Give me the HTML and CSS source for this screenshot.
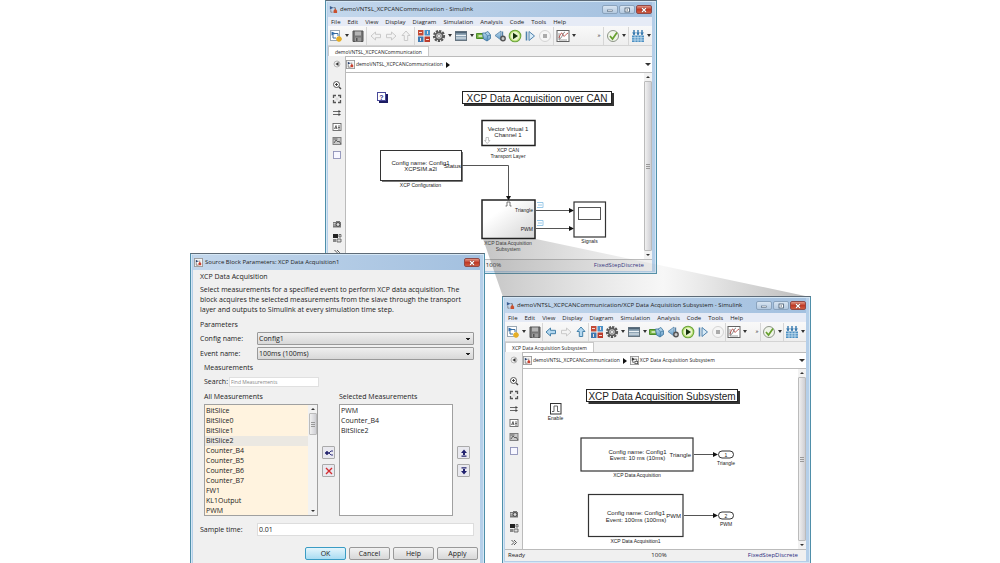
FILE: index.html
```html
<!DOCTYPE html>
<html lang="en">
<head>
<meta charset="utf-8">
<title>Simulink</title>
<link rel="stylesheet" href="styles.css">
</head>
<body>
<svg class="sprite" aria-hidden="true">
  <defs>
    <linearGradient id="g-block" x1="0" y1="0" x2="1" y2="1"><stop offset=".3" stop-color="#fff"/><stop offset="1" stop-color="#d4d4d4"/></linearGradient>
    <linearGradient id="g-blue" x1="0" y1="0" x2="0" y2="1"><stop offset="0" stop-color="#c4e0f2"/><stop offset="1" stop-color="#5d97c4"/></linearGradient>
  </defs>
  <symbol id="i-app" viewBox="0 0 10 10"><path d="M1 1l4 2-4 2z" fill="#3b5f93"/><path d="M5 3h2v2" fill="none" stroke="#555" stroke-width=".8"/><path d="M5 9V6.500L7 4l2 2.500V9z" fill="#c9502e"/><path d="M2 5v3h2" fill="none" stroke="#666" stroke-width=".7"/></symbol>
  <symbol id="i-model" viewBox="0 0 10 10"><rect x=".5" y=".5" width="9" height="9" fill="#f6f6f6" stroke="#999"/><path d="M2 2l3 1.500L2 5z" fill="#27406d"/><path d="M5 8V6l1.500-2L8 6v2z" fill="#c9402e"/><path d="M2.500 5v3H5M5 3.500h2" fill="none" stroke="#555" stroke-width=".7"/></symbol>
  <symbol id="i-sub" viewBox="0 0 10 10"><rect x=".5" y=".5" width="9" height="9" fill="#f6f6f6" stroke="#999"/><path d="M2 1.500l3.500 2L2 5.500z" fill="#333"/><path d="M5 3.500h2.500V6M3 5v2h2" fill="none" stroke="#444" stroke-width=".8"/><rect x="5.500" y="6" width="3" height="2.500" fill="#fff" stroke="#444" stroke-width=".8"/></symbol>
  <symbol id="i-new" viewBox="0 0 14 14"><rect x="1.500" y="1.500" width="9" height="10" fill="#fff" stroke="#9aa7b3"/><path d="M2.500 2.500L7 4.500 2.500 6.500z" fill="#2f6ba8"/><path d="M6 4.500h3V7M4 6v3h3" fill="none" stroke="#3c6f9d"/><path d="M10 7v6M7 10h6M8 8l4 4M12 8l-4 4" stroke="#e5ad24" stroke-width="1.400"/></symbol>
  <symbol id="i-save" viewBox="0 0 14 14"><path d="M2 2h10v10.500H2z" fill="#777" stroke="#555"/><rect x="4" y="2.500" width="6" height="4" fill="#b5b5b5"/><rect x="4" y="8.500" width="6" height="4" fill="#9a9a9a"/><rect x="5" y="9" width="1.500" height="3" fill="#555"/></symbol>
  <symbol id="i-arrow" viewBox="0 0 14 14"><path d="M2 7l4.500-4v2.300h5v3.400h-5V11z"/></symbol>
  <symbol id="i-lib" viewBox="0 0 14 14"><path d="M1 1h5.500v5.500H1z" fill="#c34a36"/><path d="M7.500 1H13v5.500H7.500z" fill="#4b92c8"/><path d="M1 7.500h5.500V13H1z" fill="#3f79b0"/><path d="M7.500 7.500H13V13H7.500z" fill="#bb3d2e"/><path d="M2 3.500h3M10.500 2v3M3.500 9v3M9 10.500h3" stroke="#f5dcd5"/></symbol>
  <symbol id="i-gear" viewBox="0 0 14 14"><circle cx="7" cy="7" r="5" fill="none" stroke="#555" stroke-width="2.200" stroke-dasharray="2.200 1.100"/><circle cx="7" cy="7" r="3.600" fill="#c7c7c7" stroke="#595959" stroke-width="1.600"/><circle cx="7" cy="7" r="1.500" fill="#fff" stroke="#666" stroke-width=".6"/></symbol>
  <symbol id="i-table" viewBox="0 0 14 14"><rect x="1.500" y="2.500" width="11" height="9" fill="#8fa5b6" stroke="#66747f"/><path d="M1.500 3.500h11" stroke="#4f6476" stroke-width="1.600"/><path d="M2 6.500h10M2 9h10" stroke="#e9f0f4"/></symbol>
  <symbol id="i-update" viewBox="0 0 16 14"><path d="M1 4.500h7v5H1z" fill="#79b343" stroke="#4c8b2c"/><path d="M3 7h4" stroke="#e6f3d8" stroke-width="1.500"/><path d="M7 4h2.500l3-1.500L15 6v3.500L11.500 12 8 10z" fill="url(#g-blue)" stroke="#3b749d" stroke-width=".8"/><path d="M9.500 4L12 7l3-1M12 7l-.5 5" fill="none" stroke="#3b749d" stroke-width=".7"/></symbol>
  <symbol id="i-back" viewBox="0 0 14 14"><path d="M8 2L2 6.500 8 11z" fill="url(#g-blue)" stroke="#5682a6" stroke-width=".8"/><path d="M9.500 2.500V8" stroke="#5682a6" stroke-width="1.400"/><circle cx="10" cy="9.500" r="2.200" fill="#ccc" stroke="#555" stroke-width="1.400"/></symbol>
  <symbol id="i-play" viewBox="0 0 14 14"><circle cx="7" cy="7" r="5.800" fill="#bde17a" stroke="#6aa53a" stroke-width="1.100"/><circle cx="7" cy="7" r="4.200" fill="#e8f6cd"/><path d="M5 3.800L10 7l-5 3.200z" fill="#14300c"/></symbol>
  <symbol id="i-step" viewBox="0 0 14 14"><path d="M3.500 2.500v9" stroke="#4f82ad" stroke-width="1.600"/><path d="M6 2.500L11.500 7 6 11.500z" fill="#d9ebf7" stroke="#4f82ad"/></symbol>
  <symbol id="i-stop" viewBox="0 0 14 14"><circle cx="7" cy="7" r="5.500" fill="#f5f5f5" stroke="#d4d4d4"/><rect x="5" y="5" width="4" height="4" fill="#aaa"/></symbol>
  <symbol id="i-scope" viewBox="0 0 14 14"><rect x="1" y="1.500" width="12" height="11" fill="#fff" stroke="#626262"/><path d="M3 4v7h8" fill="none" stroke="#888" stroke-width=".8"/><path d="M3 9c2-6 3-6 4-3s2 0 5-2" fill="none" stroke="#b0403a" stroke-width=".9"/><path d="M3 10c3 0 4-7 6-7" fill="none" stroke="#555" stroke-width=".7"/></symbol>
  <symbol id="i-check" viewBox="0 0 14 14"><circle cx="7" cy="7" r="5.500" fill="#f0f5e9" stroke="#8d9588"/><path d="M4 7l2.500 3L11 3.500" fill="none" stroke="#67a02e" stroke-width="1.700"/></symbol>
  <symbol id="i-build" viewBox="0 0 14 14"><path d="M3 1v5M7 1v5M11 1v5" stroke="#3779ae" stroke-width="1.400"/><path d="M1 3.500h4L3 6zM5 3.500h4L7 6zM9 3.500h4L11 6z" fill="#3779ae"/><rect x="1" y="6.500" width="12" height="6.500" fill="#4e90c2"/><path d="M1 8.700h12M1 11h12M4 7v6M7 7v6M10 7v6" stroke="#cce3f2" stroke-width=".8"/></symbol>
  <symbol id="i-hide" viewBox="0 0 10 10"><circle cx="5" cy="5" r="3" fill="#eee" stroke="#aaa" stroke-width=".8"/><path d="M6.500 3v4L3.500 5z" fill="#333"/></symbol>
  <symbol id="i-zoom" viewBox="0 0 10 10"><circle cx="4.500" cy="4.500" r="3" fill="#fff" stroke="#555"/><path d="M7 7l2 2" stroke="#444" stroke-width="1.400"/><path d="M3 4.500h3M4.500 3v3" stroke="#333" stroke-width=".9"/></symbol>
  <symbol id="i-fit" viewBox="0 0 10 10"><path d="M1.500 4V1.500H4M6 1.500h2.500V4M8.500 6v2.500H6M4 8.500H1.500V6" fill="none" stroke="#555" stroke-width="1.300"/><rect x="3.500" y="3.500" width="3" height="3" fill="#ddd"/></symbol>
  <symbol id="i-lines" viewBox="0 0 10 10"><path d="M1 3.500h6M1 6.500h6" stroke="#555" stroke-width=".9"/><path d="M6.500 2L9 3.500 6.500 5zM6.500 5L9 6.500 6.500 8z" fill="#444"/></symbol>
  <symbol id="i-note" viewBox="0 0 10 10"><rect x="1" y="1.500" width="8" height="7" fill="#fff" stroke="#666" stroke-width=".9"/><path d="M2.500 7L4 3.500 5 7M3 6h2M6 4h2M6 5.500h2M6 7h2" fill="none" stroke="#444" stroke-width=".8"/></symbol>
  <symbol id="i-image" viewBox="0 0 10 10"><rect x="1" y="1.500" width="8" height="7" fill="#c8c8c8" stroke="#777" stroke-width=".9"/><path d="M1.500 3h4M2 7l2-3 2 2 1-1 2 3" fill="none" stroke="#555" stroke-width=".9"/></symbol>
  <symbol id="i-area" viewBox="0 0 10 10"><rect x="1.500" y="1.500" width="7" height="7" fill="#f7f7ff" stroke="#8f92b8" stroke-width=".9"/></symbol>
  <symbol id="i-camera" viewBox="0 0 10 10"><path d="M1 3h3V2h4v1h1v5.500H1z" fill="#777"/><circle cx="6" cy="5.500" r="1.900" fill="#ddd" stroke="#333" stroke-width=".8"/><path d="M1.500 4.500h2M1.500 6h2" stroke="#eee" stroke-width=".7"/></symbol>
  <symbol id="i-browser" viewBox="0 0 10 10"><path d="M1 1h5v4H1z" fill="#222"/><rect x="1" y="6" width="3" height="3" fill="#888"/><path d="M5 6h4v3H5zM7 1.500h2V4H7z" fill="#ddd" stroke="#555" stroke-width=".8"/></symbol>
  <symbol id="i-more" viewBox="0 0 10 10"><path d="M2.500 3L5 5.500 2.500 8M5 3l2.500 2.500L5 8" fill="none" stroke="#444" stroke-width=".9"/></symbol>
  <symbol id="i-min" viewBox="0 0 8 6"><rect x="1.500" y="3" width="5" height="1.500" fill="#fff" stroke="#50657a" stroke-width=".6"/></symbol>
  <symbol id="i-max" viewBox="0 0 8 6"><rect x="2" y="1" width="4.500" height="4" fill="#fff" stroke="#44586c" stroke-width=".8"/><path d="M3.500 3h1.500" stroke="#44586c"/></symbol>
  <symbol id="i-close" viewBox="0 0 8 6"><path d="M2 1l4 4M6 1L2 5" stroke="#6f2018" stroke-width="2"/><path d="M2 1l4 4M6 1L2 5" stroke="#fff" stroke-width="1.300"/></symbol>
</svg>

<main class="desktop">
  <section class="window window-model" aria-label="Model window">
    <header class="titlebar">
      <svg class="app-icon"><use href="#i-app"/></svg>
      <h1 class="title">demoVNTSL_XCPCANCommunication - Simulink</h1>
      <div class="controls">
        <button aria-label="Minimize"><svg><use href="#i-min"/></svg></button>
        <button aria-label="Maximize"><svg><use href="#i-max"/></svg></button>
        <button class="close" aria-label="Close"><svg><use href="#i-close"/></svg></button>
      </div>
    </header>
    <nav class="menu"><button>File</button><button>Edit</button><button>View</button><button>Display</button><button>Diagram</button><button>Simulation</button><button>Analysis</button><button>Code</button><button>Tools</button><button>Help</button></nav>
    <div class="toolbar">
      <button class="tool" aria-label="New"><svg><use href="#i-new"/></svg></button><button class="caret" aria-label="New options"></button>
      <button class="tool" aria-label="Save"><svg><use href="#i-save"/></svg></button><i class="sep"></i>
      <button class="tool off" aria-label="Back"><svg><use href="#i-arrow"/></svg></button>
      <button class="tool off flip" aria-label="Forward"><svg><use href="#i-arrow"/></svg></button>
      <button class="tool off turn" aria-label="Up"><svg><use href="#i-arrow"/></svg></button><i class="sep"></i>
      <button class="tool" aria-label="Library"><svg><use href="#i-lib"/></svg></button>
      <button class="tool" aria-label="Settings"><svg><use href="#i-gear"/></svg></button><button class="caret" aria-label="Settings options"></button>
      <button class="tool" aria-label="Explorer"><svg><use href="#i-table"/></svg></button><button class="caret" aria-label="Explorer options"></button>
      <button class="tool wide" aria-label="Update"><svg><use href="#i-update"/></svg></button>
      <button class="tool" aria-label="Step back"><svg><use href="#i-back"/></svg></button>
      <button class="tool" aria-label="Run"><svg><use href="#i-play"/></svg></button>
      <button class="tool" aria-label="Step forward"><svg><use href="#i-step"/></svg></button>
      <button class="tool" aria-label="Stop"><svg><use href="#i-stop"/></svg></button>
      <i class="sep"></i><button class="tool" aria-label="Scope"><svg><use href="#i-scope"/></svg></button><button class="caret" aria-label="Scope options"></button>
      <button class="overflow">»</button><i class="sep"></i>
      <button class="tool" aria-label="Check"><svg><use href="#i-check"/></svg></button><button class="caret" aria-label="Check options"></button><i class="sep"></i>
      <button class="tool" aria-label="Build"><svg><use href="#i-build"/></svg></button><button class="caret" aria-label="Build options"></button>
    </div>
    <div class="tabs"><button class="tab">demoVNTSL_XCPCANCommunication</button></div>
    <div class="workspace">
      <aside class="palette">
        <button class="hide" aria-label="Hide browser"><svg><use href="#i-hide"/></svg></button>
        <button aria-label="Zoom"><svg><use href="#i-zoom"/></svg></button>
        <button aria-label="Fit"><svg><use href="#i-fit"/></svg></button>
        <button aria-label="Signals"><svg><use href="#i-lines"/></svg></button>
        <button aria-label="Annotation"><svg><use href="#i-note"/></svg></button>
        <button aria-label="Image"><svg><use href="#i-image"/></svg></button>
        <button aria-label="Area"><svg><use href="#i-area"/></svg></button>
        <button class="low" aria-label="Camera"><svg><use href="#i-camera"/></svg></button>
        <button aria-label="Model browser"><svg><use href="#i-browser"/></svg></button>
        <button aria-label="More"><svg><use href="#i-more"/></svg></button>
      </aside>
      <div class="editor">
        <div class="crumbs"><svg class="crumb-icon"><use href="#i-model"/></svg><span>demoVNTSL_XCPCANCommunication</span><i class="crumb-arrow"></i><button class="caret big" aria-label="History"></button></div>
        <div class="canvas">
          <svg class="diagram" height="186" viewBox="346 73 298 186" preserveAspectRatio="xMinYMin meet">
            <rect x="379" y="94" width="9" height="9" fill="#1b1b62"/><rect x="377.500" y="92.500" width="8" height="8" fill="#fff" stroke="#4a4a9a"/><text class="help" x="381.500" y="99.500">?</text>
            <rect x="464" y="93" width="150" height="13" fill="#333"/><rect x="462.500" y="91.500" width="149" height="12" fill="#fff" stroke="#222"/><text class="head" x="537" y="101.500">XCP Data Acquisition over CAN</text>
            <rect x="482" y="120.500" width="53" height="25" fill="#fff" stroke="#222" stroke-width="1.500"/><text x="508" y="131">Vector Virtual 1</text><text x="508" y="137">Channel 1</text><path d="M486 137.500h2.500v3h1.500l-2.800 3-2.700-3h1.500z" fill="#fff" stroke="#aaa" stroke-width=".7"/>
            <text class="tag" x="508" y="151.500">XCP CAN</text><text class="tag" x="508" y="158">Transport Layer</text>
            <path d="M382 181.500h80.500V152" fill="none" stroke="#777"/><rect x="380.500" y="150.500" width="81" height="30" fill="#fff" stroke="#333"/><text x="420.500" y="164.500">Config name: Config1</text><text x="420.500" y="170.500">XCPSIM.a2l</text><text class="end" x="461" y="168">Status</text><text class="tag" x="420.500" y="186.500">XCP Configuration</text>
            <path d="M462 165.500h46.500V197" fill="none" stroke="#555"/><path d="M506 196h5l-2.500 4.500z" fill="#111"/>
            <rect x="482" y="200" width="53" height="38.500" fill="url(#g-block)" stroke="#222" stroke-width="1.500"/><path d="M505.500 206h1.500v-4h3v4h1.500" fill="none" stroke="#555" stroke-width=".8"/><text class="tag end" x="533" y="212">Triangle</text><text class="tag end" x="533" y="230.500">PWM</text>
            <path d="M536 210.500h36M536 228.500h36" stroke="#555"/><path d="M569 208l5 2.500-5 2.500zM569 226l5 2.500-5 2.500z" fill="#111"/>
            <path d="M537 202.500h6v5h-6M538 205h4M537 220.500h6v5h-6M538 223h4" fill="none" stroke="#8fc3e5" stroke-width=".9"/>
            <rect x="574" y="202" width="31.500" height="35" fill="#fff" stroke="#333" stroke-width="1.200"/><rect x="578.500" y="207.500" width="22" height="12" fill="#fff" stroke="#555"/><text class="tag" x="589.500" y="243">Signals</text>
            <text class="tag" x="508" y="245">XCP Data Acquisition</text><text class="tag" x="508" y="251">Subsystem</text>
          </svg>
          <div class="scroll"><i class="up"></i><i class="thumb"></i><i class="down"></i></div>
        </div>
      </div>
    </div>
    <footer class="status"><span></span><span class="zoom-level">100%</span><span class="solver">FixedStepDiscrete</span></footer>
  </section>

  <svg class="callout" viewBox="482 239 328 58" preserveAspectRatio="none" aria-hidden="true">
    <defs><linearGradient id="g-fan"><stop offset="0" stop-color="#666" stop-opacity=".38"/><stop offset=".2" stop-color="#777" stop-opacity=".28"/><stop offset=".55" stop-color="#999" stop-opacity=".08"/><stop offset=".75" stop-color="#777" stop-opacity=".25"/><stop offset="1" stop-color="#666" stop-opacity=".45"/></linearGradient></defs>
    <path d="M483 239h53l274 58H503z" fill="url(#g-fan)"/>
  </svg>

  <section class="window window-sub" aria-label="Subsystem window">
    <header class="titlebar">
      <svg class="app-icon"><use href="#i-app"/></svg>
      <h2 class="title">demoVNTSL_XCPCANCommunication/XCP Data Acquisition Subsystem - Simulink</h2>
      <div class="controls">
        <button aria-label="Minimize"><svg><use href="#i-min"/></svg></button>
        <button aria-label="Maximize"><svg><use href="#i-max"/></svg></button>
        <button class="close" aria-label="Close"><svg><use href="#i-close"/></svg></button>
      </div>
    </header>
    <nav class="menu"><button>File</button><button>Edit</button><button>View</button><button>Display</button><button>Diagram</button><button>Simulation</button><button>Analysis</button><button>Code</button><button>Tools</button><button>Help</button></nav>
    <div class="toolbar tight">
      <button class="tool" aria-label="New"><svg><use href="#i-new"/></svg></button><button class="caret" aria-label="New options"></button>
      <button class="tool" aria-label="Save"><svg><use href="#i-save"/></svg></button><i class="sep"></i>
      <button class="tool on" aria-label="Back"><svg><use href="#i-arrow"/></svg></button>
      <button class="tool off flip" aria-label="Forward"><svg><use href="#i-arrow"/></svg></button>
      <button class="tool on turn" aria-label="Up"><svg><use href="#i-arrow"/></svg></button><i class="sep"></i>
      <button class="tool" aria-label="Library"><svg><use href="#i-lib"/></svg></button>
      <button class="tool" aria-label="Settings"><svg><use href="#i-gear"/></svg></button><button class="caret" aria-label="Settings options"></button>
      <button class="tool" aria-label="Explorer"><svg><use href="#i-table"/></svg></button><button class="caret" aria-label="Explorer options"></button>
      <button class="tool wide" aria-label="Update"><svg><use href="#i-update"/></svg></button>
      <button class="tool" aria-label="Step back"><svg><use href="#i-back"/></svg></button>
      <button class="tool" aria-label="Run"><svg><use href="#i-play"/></svg></button>
      <button class="tool" aria-label="Step forward"><svg><use href="#i-step"/></svg></button>
      <button class="tool" aria-label="Stop"><svg><use href="#i-stop"/></svg></button>
      <i class="sep"></i><button class="tool" aria-label="Scope"><svg><use href="#i-scope"/></svg></button><button class="caret" aria-label="Scope options"></button>
      <button class="overflow">»</button><i class="sep"></i>
      <button class="tool" aria-label="Check"><svg><use href="#i-check"/></svg></button><button class="caret" aria-label="Check options"></button><i class="sep"></i>
      <button class="tool" aria-label="Build"><svg><use href="#i-build"/></svg></button><button class="caret" aria-label="Build options"></button>
    </div>
    <div class="tabs"><button class="tab">XCP Data Acquisition Subsystem</button></div>
    <div class="workspace">
      <aside class="palette">
        <button class="hide" aria-label="Hide browser"><svg><use href="#i-hide"/></svg></button>
        <button aria-label="Zoom"><svg><use href="#i-zoom"/></svg></button>
        <button aria-label="Fit"><svg><use href="#i-fit"/></svg></button>
        <button aria-label="Signals"><svg><use href="#i-lines"/></svg></button>
        <button aria-label="Annotation"><svg><use href="#i-note"/></svg></button>
        <button aria-label="Image"><svg><use href="#i-image"/></svg></button>
        <button aria-label="Area"><svg><use href="#i-area"/></svg></button>
        <button class="low" aria-label="Camera"><svg><use href="#i-camera"/></svg></button>
        <button aria-label="Model browser"><svg><use href="#i-browser"/></svg></button>
        <button aria-label="More"><svg><use href="#i-more"/></svg></button>
      </aside>
      <div class="editor">
        <div class="crumbs"><svg class="crumb-icon"><use href="#i-model"/></svg><span>demoVNTSL_XCPCANCommunication</span><i class="crumb-arrow"></i><svg class="crumb-icon"><use href="#i-sub"/></svg><span>XCP Data Acquisition Subsystem</span><button class="caret big" aria-label="History"></button></div>
        <div class="canvas">
          <svg class="diagram" height="180" viewBox="523 369 275 180" preserveAspectRatio="xMinYMin meet">
            <rect x="588.500" y="391" width="151.500" height="13" fill="#333"/><rect x="586.500" y="389.500" width="151" height="12" fill="#fff" stroke="#222"/><text class="head" x="662" y="399.500">XCP Data Acquisition Subsystem</text>
            <rect x="550.500" y="403.500" width="10.500" height="10.500" fill="#fff" stroke="#333"/><path d="M552 411.500h2v-5.500h3.500v5.500h2" fill="none" stroke="#555" stroke-width=".9"/><text class="tag" x="555.500" y="420">Enable</text>
            <rect x="581" y="438" width="112" height="33" fill="#fff" stroke="#333" stroke-width="1.200"/><text x="637.500" y="453.500">Config name: Config1</text><text x="637.500" y="459.500">Event: 10 ms (10ms)</text><text class="end" x="691" y="456.500">Triangle</text><text class="tag" x="637" y="477">XCP Data Acquisition</text>
            <path d="M694 454.500h20" stroke="#555"/><path d="M713 452l5 2.500-5 2.500z" fill="#111"/><rect x="718.500" y="451" width="15" height="7" rx="3.500" fill="#fff" stroke="#333"/><text class="tag" x="726" y="456.500">1</text><text class="tag" x="726" y="464.500">Triangle</text>
            <rect x="588.500" y="494.500" width="94.500" height="42" fill="#fff" stroke="#333" stroke-width="1.200"/><text x="636" y="515">Config name: Config1</text><text x="636" y="521.500">Event: 100ms (100ms)</text><text class="end" x="681" y="517.500">PWM</text><text class="tag" x="635.500" y="542.500">XCP Data Acquisition1</text>
            <path d="M684 515.500h30" stroke="#555"/><path d="M713 513l5 2.500-5 2.500z" fill="#111"/><rect x="718.500" y="512" width="15" height="7" rx="3.500" fill="#fff" stroke="#333"/><text class="tag" x="726" y="517.500">2</text><text class="tag" x="726" y="525.500">PWM</text>
          </svg>
          <div class="scroll"><i class="up"></i><i class="thumb"></i><i class="down"></i></div>
        </div>
      </div>
    </div>
    <footer class="status"><span>Ready</span><span class="zoom-level">100%</span><span class="solver">FixedStepDiscrete</span></footer>
  </section>

  <form class="window dialog" aria-label="Block parameters">
    <header class="titlebar">
      <svg class="app-icon"><use href="#i-model"/></svg>
      <h2 class="title">Source Block Parameters: XCP Data Acquisition1</h2>
      <div class="controls"><button type="button" class="close" aria-label="Close"><svg><use href="#i-close"/></svg></button></div>
    </header>
    <div class="form">
      <h3>XCP Data Acquisition</h3>
      <p class="about">Select measurements for a specified event to perform XCP data acquisition. The<br>block acquires the selected measurements from the slave through the transport<br>layer and outputs to Simulink at every simulation time step.</p>
      <h3>Parameters</h3>
      <div class="field"><label for="config">Config name:</label><select id="config"><option>Config1</option></select></div>
      <div class="field"><label for="event">Event name:</label><select id="event"><option>100ms (100ms)</option></select></div>
      <div class="group">
        <h3>Measurements</h3>
        <div class="search"><label for="search">Search:</label><input id="search" type="text" placeholder="Find Measurements"></div>
        <div class="lists">
          <div class="list-col">
            <label for="all">All Measurements</label>
            <div class="listbox cream">
              <select id="all" multiple size="11"><option>BitSlice</option><option>BitSlice0</option><option>BitSlice1</option><option class="hot">BitSlice2</option><option>Counter_B4</option><option>Counter_B5</option><option>Counter_B6</option><option>Counter_B7</option><option>FW1</option><option>KL1Output</option><option>PWM</option></select>
              <div class="scroll"><i class="up"></i><i class="thumb"></i><i class="down"></i></div>
            </div>
          </div>
          <div class="moves">
            <button type="button" aria-label="Add"><svg viewBox="0 0 10 10"><path d="M1 5h4M3 3v4" stroke="#181866" stroke-width="1.400"/><path d="M5 5l2-2h2M5 5l2 2h2" fill="none" stroke="#333380"/></svg></button>
            <button type="button" aria-label="Remove"><svg viewBox="0 0 10 10"><path d="M2 2l6 6M8 2L2 8" stroke="#d32c30" stroke-width="1.400"/></svg></button>
          </div>
          <div class="list-col">
            <label for="chosen">Selected Measurements</label>
            <div class="listbox"><select id="chosen" multiple size="11"><option>PWM</option><option>Counter_B4</option><option>BitSlice2</option></select></div>
          </div>
          <div class="moves">
            <button type="button" aria-label="Move up"><svg viewBox="0 0 10 10"><path d="M5 1.500L8 5H6v2H4V5H2zM2.500 7.500h5v1.200h-5z" fill="#22226e"/></svg></button>
            <button type="button" aria-label="Move down"><svg viewBox="0 0 10 10"><path d="M5 8.500L8 5H6V3H4v2H2zM2.500 1.300h5v1.200h-5z" fill="#22226e"/></svg></button>
          </div>
        </div>
      </div>
      <div class="field sample"><label for="sample">Sample time:</label><input id="sample" type="text" value="0.01"></div>
      <div class="actions"><button type="button" class="primary">OK</button><button type="button">Cancel</button><button type="button">Help</button><button type="button">Apply</button></div>
    </div>
  </form>
</main>
</body>
</html>
```

FILE: styles.css
```css
* { box-sizing: border-box; }
body { margin: 0; background: #fff; color: #222; font: 6px/9px "Open Sans", "Noto Sans", sans-serif; }
button, input, select { font: inherit; color: inherit; margin: 0; padding: 0; border: 0; background: none; border-radius: 0; }
h1, h2, h3, p { margin: 0; font: inherit; }
.sprite { position: absolute; width: 0; height: 0; }
.desktop { position: relative; min-height: 563px; overflow: hidden; }

/* Windows */
.window { position: absolute; display: flex; flex-direction: column; border: 1px solid #4f8fa9; border-top-color: #5e6b77; background: #b5cfe9; padding: 1px 4px 2px 2px; box-shadow: inset 0 0 0 1px #d5e7f5; }
.window-model { left: 32.500%; top: 0; width: 33.200%; }
.window-sub { left: 50.200%; top: 296px; width: 30.900%; }
.dialog { left: 19%; top: 253px; width: 29.500%; }
.titlebar { display: flex; align-items: center; height: 15px; padding-left: 1px; gap: 2px; background: linear-gradient(90deg, #c3d7ec, #a3c0df); }
.app-icon { width: 9px; height: 9px; flex: none; }
.title { flex: 1; min-width: 0; white-space: nowrap; }
.controls { display: flex; gap: 1px; height: 9px; }
.controls button { width: 16px; display: grid; place-items: center; border: 1px solid #8aa3bd; border-radius: 2px; background: linear-gradient(#d7e4f1, #b4c9df); }
.controls svg { width: 8px; height: 6px; }
.controls .close { background: linear-gradient(#e39684, #c03a26 50%, #cf5d42); border-color: #8f4a48; }

.menu { display: flex; gap: 7px; height: 9px; padding-left: 3px; background: #e6ebf6; }
.menu button { line-height: 8px; }
.toolbar { display: flex; align-items: center; height: 20px; background: linear-gradient(#f9f9f9, #eee); border-bottom: 1px solid #d4d4d4; }
.tool { width: 15px; height: 16px; display: grid; place-items: center; flex: none; }
.tool svg { width: 14px; height: 14px; }
.tool.wide, .wide svg { width: 17px; }
.tool.off { fill: #f3f3f3; stroke: #c9c9c9; }
.tool.on { fill: #b4d8f0; stroke: #4682ab; }
.flip svg { transform: scaleX(-1); }
.turn svg { transform: rotate(90deg); }
.sep { flex: none; width: 1px; height: 18px; margin: 0 1px; background: #d6d6d6; }
.tight .sep { margin: 0; }
.caret { flex: none; width: 7px; height: 12px; display: grid; place-items: center; }
.caret::before { content: ""; border: 2px solid transparent; border-top: 3px solid #333; border-bottom: 0; }
.caret.big { width: 8px; margin-left: auto; }
.caret.big::before { border-width: 3px 3px 0; }
.overflow { margin-left: auto; width: 6px; }

.tabs { display: flex; height: 10px; background: #f0f0f0; }
.tab { min-width: 88px; padding: 0 6px; background: #fff; border: 1px solid #c8c8c8; border-bottom: 0; font-size: 5px; line-height: 8px; white-space: nowrap; }
.workspace { display: flex; }
.palette { flex: none; width: 17px; display: flex; flex-direction: column; align-items: center; gap: 4px; padding: 3px 0 2px; background: #f0f0f0; }
.palette button { height: 10px; }
.palette svg { display: block; width: 10px; height: 10px; }
.palette .hide { margin-bottom: 7px; }
.palette .low { margin-top: auto; }
.editor { flex: 1; min-width: 0; }
.crumbs { display: flex; align-items: center; gap: 1px; height: 17px; background: #fff; border: 1px solid #bbb; border-right: 0; font-size: 5px; white-space: nowrap; }
.crumb-icon { flex: none; width: 9px; height: 9px; }
.crumb-arrow { margin: 0 2px; border: 3px solid transparent; border-left: 4px solid #111; border-right: 0; }
.canvas { display: flex; background: #fff; border-left: 1px solid #bbb; }
.diagram { display: block; flex: 1; min-width: 0; font: 6px "Liberation Sans", Arial, sans-serif; text-anchor: middle; fill: #222; }
.diagram .head { font-size: 10px; }
.diagram .tag { font-size: 5px; }
.diagram .end { text-anchor: end; }
.diagram .help { font-size: 7px; font-weight: bold; fill: #33338a; }
.scroll { flex: none; width: 8px; display: flex; flex-direction: column; align-items: center; background: #f2f2f2; }
.scroll .up, .scroll .down { margin: 3px 0; border: 2px solid transparent; }
.scroll .up { border-bottom: 2px solid #333; border-top: 0; }
.scroll .down { border-top: 2px solid #333; border-bottom: 0; }
.scroll .thumb { flex: 1; width: 8px; border: 1px solid #bbb; border-radius: 1px; background: repeating-linear-gradient(#999 0 1px, transparent 1px 2px) center / 4px 5px no-repeat, linear-gradient(90deg, #f0f0f0, #cfcfd4); }
.status { display: grid; grid-template-columns: 1fr auto 1fr; align-items: center; height: 12px; padding: 0 8px 0 3px; background: #f0f0f0; border-top: 1px solid #bbb; }
.zoom-level { padding-left: 12px; }
.solver { text-align: right; color: #2a2a80; }
.callout { position: absolute; left: 48.200%; top: 239px; width: 32.800%; height: 58px; }

/* Parameter dialog */
.form { background: #f0f0f0; padding: 2px 6px 4px 7px; font: 7px/10px "Open Sans", "Noto Sans", sans-serif; }
.about { margin: 3px 0 5px; white-space: nowrap; }
.field { display: flex; align-items: center; height: 13px; margin-top: 2px; }
.field label { flex: none; width: 57px; }
.field select, .field input { flex: 1; min-width: 0; height: 13px; }
.field select { appearance: none; padding-left: 1px; border: 1px solid #999; border-radius: 1px; background: linear-gradient(45deg, transparent 50%, #222 50%) right 5px center / 2px 2px no-repeat, linear-gradient(-45deg, transparent 50%, #222 50%) right 3px center / 2px 2px no-repeat, linear-gradient(#efefef, #d8d8d8); }
.group { padding: 3px 4px 0; }
.search { display: flex; align-items: center; height: 11px; margin-top: 3px; gap: 1px; }
.search input { width: 90px; height: 10px; padding-left: 1px; background: #fff; border: 1px solid #e0e0e0; font-size: 5px; }
.search input::placeholder { color: #888; }
.lists { display: flex; gap: 4px; margin-top: 5px; }
.list-col { flex: 1; min-width: 0; display: flex; flex-direction: column; gap: 2px; }
.listbox { display: flex; height: 112px; border: 1px solid #a0a0a0; background: #fff; }
.listbox.cream { background: #fff3df; }
.listbox select { flex: 1; min-width: 0; height: 110px; padding-top: 1px; overflow: hidden; outline: 0; }
.listbox option { height: 10px; min-height: 10px; padding: 0 1px; font-size: 7px; line-height: 10px; }
.listbox .hot { background: #ebe8e2; }
.listbox .scroll { width: 9px; }
.listbox .thumb { flex: 0 0 22px; }
.listbox .down { margin-top: auto; }
.moves { flex: none; display: flex; flex-direction: column; gap: 5px; padding-top: 54px; }
.moves button { width: 13px; height: 13px; display: grid; place-items: center; border: 1px solid #aaa; border-radius: 1px; background: #e9e9ef; }
.moves svg { width: 10px; height: 10px; }
.sample { margin-top: 7px; }
.sample input { background: #fff; border: 1px solid #ddd; padding-left: 1px; }
.actions { display: flex; justify-content: flex-end; gap: 3px; margin: 11px -4px 0 0; }
.actions button { width: 41px; height: 13px; border: 1px solid #999; border-radius: 2px; background: linear-gradient(#f2f2f2, #d8d8d8); }
.actions .primary { border-color: #3a9cc4; background: linear-gradient(#e4f5fc, #a9dcf2); }
```
